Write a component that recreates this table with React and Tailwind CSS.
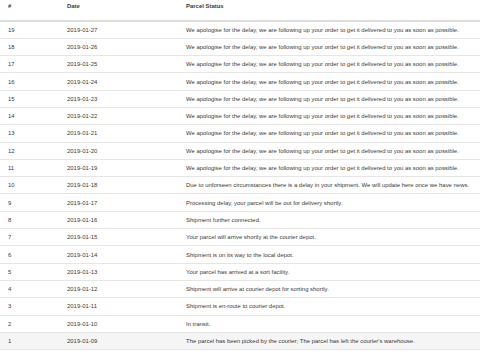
import React from 'react';

const delay = 'We apologise for the delay, we are following up your order to get it delivered to you as soon as possible.';

const rows = [
  [19, '2019-01-27', delay],
  [18, '2019-01-26', delay],
  [17, '2019-01-25', delay],
  [16, '2019-01-24', delay],
  [15, '2019-01-23', delay],
  [14, '2019-01-22', delay],
  [13, '2019-01-21', delay],
  [12, '2019-01-20', delay],
  [11, '2019-01-19', delay],
  [10, '2019-01-18', 'Due to unforseen circumstances there is a delay in your shipment. We will update here once we have news.'],
  [9, '2019-01-17', 'Processing delay, your parcel will be out for delivery shortly.'],
  [8, '2019-01-16', 'Shipment further connected.'],
  [7, '2019-01-15', 'Your parcel will arrive shortly at the courier depot.'],
  [6, '2019-01-14', 'Shipment is on its way to the local depot.'],
  [5, '2019-01-13', 'Your parcel has arrived at a sort facility.'],
  [4, '2019-01-12', 'Shipment will arrive at courier depot for sorting shortly.'],
  [3, '2019-01-11', 'Shipment is en-route to courier depot.'],
  [2, '2019-01-10', 'In transit.'],
  [1, '2019-01-09', "The parcel has been picked by the courier; The parcel has left the courier's warehouse."],
];

export default function App() {
  return (
    <div className="w-[480px] h-[354px] overflow-hidden bg-white text-[#3a3a3a] font-['Liberation_Sans',Arial,sans-serif] text-[5.95px] leading-[8px]">
      <table className="w-full table-fixed border-collapse">
        <colgroup>
          <col className="w-[59px]" />
          <col className="w-[119px]" />
          <col />
        </colgroup>
        <thead>
          <tr className="h-[21px] border-b-2 border-[#dddddd]">
            <th className="pl-2 pt-[2px] pb-[9px] text-left align-top font-bold">#</th>
            <th className="pl-2 pt-[2px] pb-[9px] text-left align-top font-bold">Date</th>
            <th className="pl-2 pt-[2px] pb-[9px] text-left align-top font-bold">Parcel Status</th>
          </tr>
        </thead>
        <tbody>
          {rows.map(([id, date, status]) => (
            <tr
              key={id}
              className={`h-[17.3px] border-b border-[#e6e6e6] ${id === 1 ? 'bg-[#f5f5f5]' : ''}`}
            >
              <td className="pl-2 align-middle whitespace-nowrap">{id}</td>
              <td className="pl-2 align-middle whitespace-nowrap">{date}</td>
              <td className="pl-2 align-middle whitespace-nowrap">{status}</td>
            </tr>
          ))}
        </tbody>
      </table>
    </div>
  );
}
